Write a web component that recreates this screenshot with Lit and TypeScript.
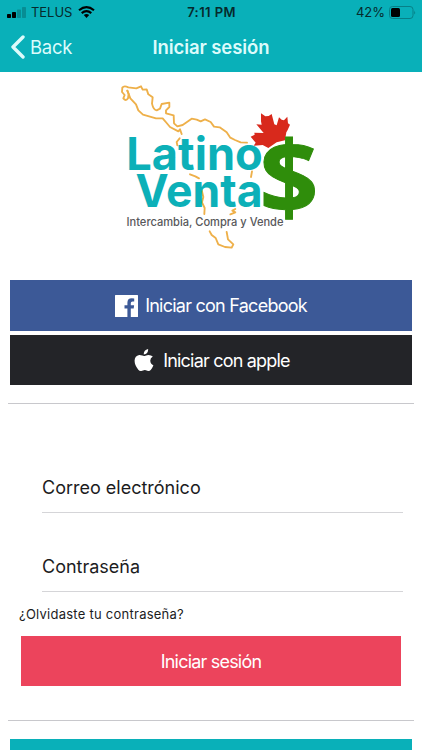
import { LitElement, html, css, svg } from "lit";
import { customElement } from "lit/decorators.js";

@customElement("brand-logo")
class BrandLogo extends LitElement {
  static styles = css`
    :host { display: block; }
    svg { display: block; }
    .map { fill: none; stroke: #eeb04a; stroke-width: 5.6; stroke-linejoin: round; stroke-linecap: round; }
    .leaf { fill: #d8291c; }
    .name { font: 700 45.5px Inter, sans-serif; fill: #0cb0b8; }
    .tag { font: 500 11.6px Inter, sans-serif; fill: #58585b; }
    .dollar { font: 700 101px "Open Sans", sans-serif; fill: #2f8d0b; stroke: #2f8d0b; stroke-width: 1px; }
  `;
  render() {
    return svg`<svg width="210" height="180" viewBox="110 75 210 180">
      <g transform="translate(110 75) scale(.33333)">
        <g class="map">
          <path d="M52 47L56 57L54 70Q48 80 40 70L44 60L36 51L37 38Q42 31 55 37L79 40L93 34L98 44L110 43L115 58L128 67L126 86Q130 105 140 106L150 101L155 87L178 83L178 96L168 106L168 115L191 121L192 145L202 154L218 150L245 131L260 134L272 139L285 133L302 141L312 155L329 157L350 172L361 188L375 195L392 202L411 203"/>
          <path d="M52 47L61 70L78 88L85 106L99 119L138 130L158 130L170 144L180 156L205 169L210 163L215 177"/>
          <path d="M209 190L200 201L202 211M240 298L256 304L267 310M275 345L280 366L276 382L284 399L283 417M299 469L305 480L317 489L325 508L345 516L365 518L370 508L354 493L352 482L350 471M426 289L423 306M376 402L367 407L376 412L361 418"/>
        </g>
        <path class="leaf" d="M453 115L466 124L476 123L485 117L493 148L500 151L507 127L515 134L522 136L532 125L534 145L540 149L533 165L529 172L525 196L500 202L475 219L458 210L431 212L437 203L422 185L434 179L433 173L461 174L439 148L455 149L453 139Z"/>
      </g>
      <text class="name" x="126.3" y="170.3" textLength="136.5" lengthAdjust="spacingAndGlyphs">Latino</text>
      <text class="name" x="135.5" y="206.7" textLength="127" lengthAdjust="spacingAndGlyphs">Venta</text>
      <text class="dollar" x="259.5" y="213.5" textLength="59" lengthAdjust="spacingAndGlyphs">$</text>
      <text class="tag" x="126.5" y="226" textLength="157" lengthAdjust="spacingAndGlyphs">Intercambia, Compra y Vende</text>
    </svg>`;
  }
}

@customElement("app-root")
class AppRoot extends LitElement {
  static styles = css`
    :host { display: block; height: 750px; overflow: hidden; background: #fff; font-family: Inter, "Liberation Sans", sans-serif; color: #1c1c1e; }
    * { box-sizing: border-box; }
    svg { display: block; flex: none; }
    header { height: 72px; background: #09b0b9; }
    .status { height: 24px; display: grid; grid-template-columns: 1fr auto 1fr; align-items: center; padding: 0 6px 0 7px; font-size: 13px; line-height: 24px; color: #062a2c; }
    .left, .right { display: flex; align-items: center; }
    .right { justify-content: flex-end; gap: 4px; }
    .carrier { margin: 0 6px 0 5px; letter-spacing: -.05px; }
    .time { font-weight: 600; letter-spacing: .4px; }
    .nav { height: 48px; display: grid; grid-template-columns: 1fr auto 1fr; align-items: center; padding: 0 10px 2px; color: #dcfbfb; font-size: 18.5px; }
    .back { display: flex; align-items: center; gap: 5px; letter-spacing: -.3px; }
    .title { font-weight: 600; font-size: 18.5px; letter-spacing: -.1px; }
    .brand { padding: 3px 0 0 110px; height: 208px; }
    .social { display: flex; flex-direction: column; gap: 4px; padding: 0 10px; }
    .btn { display: flex; align-items: center; justify-content: center; height: 50px; color: #fff; font-size: 18px; letter-spacing: -.75px; }
    .fb { background: #3c5997; height: 51px; gap: 7px; }
    .apple { background: #232428; gap: 9px; padding-left: 2px; letter-spacing: -.8px; }
    .rule { height: 1px; margin: 18px 8px 0; background: #c8c8cc; }
    .field { margin: 0 19px 0 42px; border-bottom: 1px solid #d5d5d8; height: 79px; padding-top: 41px; font-size: 18px; line-height: 26px; letter-spacing: 0; }
    .field.first { margin-top: 30px; }
    .forgot { margin: 12px 0 0 19px; font-size: 13px; line-height: 20px; letter-spacing: .25px; }
    .login { margin: 12px 21px 0; background: #ec445c; letter-spacing: -.8px; }
    .rule.low { margin-top: 34px; }
    .register { margin: 18px 10px 0; height: 12px; background: #09b0b9; }
  `;
  render() {
    return html`
      <header>
        <div class="status">
          <div class="left">
            <svg width="19" height="12" viewBox="0 0 19 12"><rect y="8" width="4" height="4" rx=".7"/><rect x="5" y="6" width="4" height="6" rx=".7"/><g fill="#078d94"><rect x="10" y="3.5" width="4" height="8.5" rx=".7"/><rect x="15" y="1" width="4" height="11" rx=".7"/></g></svg>
            <span class="carrier">TELUS</span>
            <svg width="17" height="12" viewBox="0 0 17 12" fill="none" stroke="#000" stroke-width="2.1"><path d="M1 4.3Q8.5-2 16 4.3M3.7 7.1Q8.5 3 13.3 7.1"/><path fill="#000" stroke="none" d="M8.5 12L5.8 9.1Q8.5 7 11.2 9.1Z"/></svg>
          </div>
          <span class="time">7:11 PM</span>
          <div class="right">
            <span>42%</span>
            <svg width="27" height="13" viewBox="0 0 27 13"><rect x=".5" y=".5" width="23.5" height="12" rx="3" fill="none" stroke="#078087"/><rect x="2" y="2" width="9" height="9" rx="1.5"/><path d="M25.2 4.5Q27 6.5 25.2 8.5Z" fill="#078087"/></svg>
          </div>
        </div>
        <div class="nav">
          <div class="back"><svg width="15" height="24" viewBox="0 0 15 24"><path d="M13 2L3 12L13 22" fill="none" stroke="#dcfbfb" stroke-width="3.4" stroke-linecap="round" stroke-linejoin="round"/></svg><span>Back</span></div>
          <span class="title">Iniciar sesión</span>
        </div>
      </header>
      <div class="brand"><brand-logo></brand-logo></div>
      <div class="social">
        <div class="btn fb">
          <svg width="23" height="22" viewBox="0 0 23 22"><path fill="#fff" d="M.6 0H22.4Q23 0 23 .6V21.4Q23 22 22.4 22H15.8V13.5H18.7L19.1 10.2H15.8V8.1Q15.8 6.5 17.5 6.5H19.2V3.5Q18.4 3.3 16.8 3.3Q12.4 3.3 12.4 7.7V10.2H9.5V13.5H12.4V22H.6Q0 22 0 21.4V.6Q0 0 .6 0Z"/></svg>
          <span>Iniciar con Facebook</span>
        </div>
        <div class="btn apple">
          <svg width="20" height="22" viewBox="0 0 20 22"><path fill="#fff" d="M14.1 0Q14.5 4.7 9.8 5.5Q9.4 1.3 14.1 0ZM18.8 7.5Q16.2 9.1 16.3 11.8Q16.4 14.9 19.4 16.3Q18.6 18.6 16.9 20.7Q15.7 22.1 14.1 21.9L11.9 21.2Q10.5 20.8 9 21.4L7.3 21.9Q5.7 22.3 4.3 20.7Q.5 16.3.6 11.6Q.8 6.8 5.2 6Q6.6 5.9 8.3 6.6Q10 7.3 11.4 6.7Q13.1 5.9 14.5 5.9Q17.2 6 18.8 7.5Z"/></svg>
          <span>Iniciar con apple</span>
        </div>
      </div>
      <div class="rule"></div>
      <div class="field first">Correo electrónico</div>
      <div class="field">Contraseña</div>
      <div class="forgot">¿Olvidaste tu contraseña?</div>
      <div class="btn login">Iniciar sesión</div>
      <div class="rule low"></div>
      <div class="register"></div>
    `;
  }
}
